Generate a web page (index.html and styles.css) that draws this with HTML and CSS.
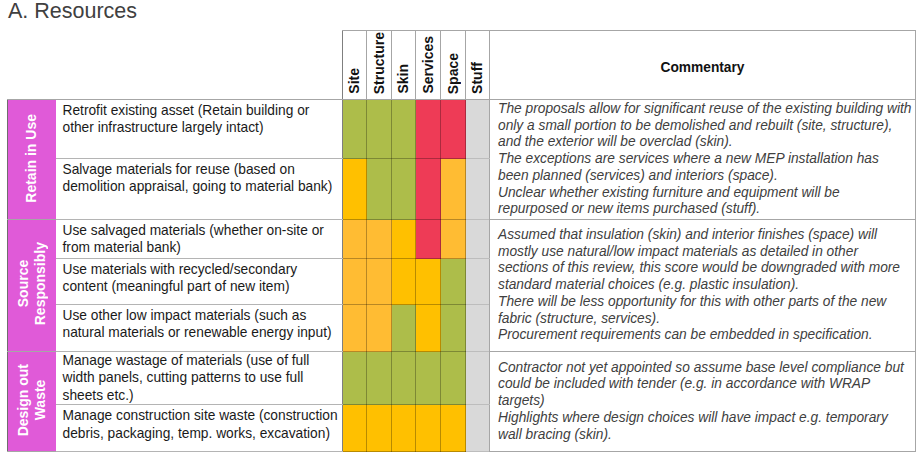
FILE: index.html
```html
<!DOCTYPE html>
<html lang="en">
<head>
<meta charset="utf-8">
<title>A. Resources</title>
<link rel="stylesheet" href="styles.css">
</head>
<body>
<h1 class="title">A. Resources</h1>
<table class="grid">
  <colgroup>
    <col class="c-group"><col class="c-desc">
    <col class="c-24"><col class="c-25"><col class="c-24"><col class="c-25"><col class="c-25"><col class="c-24">
    <col class="c-comm">
  </colgroup>
  <thead>
    <tr class="head">
      <th class="blank" colspan="2"></th>
      <th class="rot first"><span>Site</span></th>
      <th class="rot"><span>Structure</span></th>
      <th class="rot"><span>Skin</span></th>
      <th class="rot"><span>Services</span></th>
      <th class="rot"><span>Space</span></th>
      <th class="rot"><span>Stuff</span></th>
      <th class="comm-h">Commentary</th>
    </tr>
  </thead>
  <tbody>
    <tr class="h59">
      <td class="group" rowspan="2"><span>Retain in Use</span></td>
      <td class="desc">Retrofit existing asset (Retain building or<br>other infrastructure largely intact)</td>
      <td class="cell g first"></td><td class="cell g"></td><td class="cell g"></td><td class="cell r"></td><td class="cell r"></td><td class="cell x"></td>
      <td class="comm" rowspan="2">The proposals allow for significant reuse of the existing building with<br>only a small portion to be demolished and rebuilt (site, structure),<br>and the exterior will be overclad (skin).<br>The exceptions are services where a new MEP installation has<br>been planned (services) and interiors (space).<br>Unclear whether existing furniture and equipment will be<br>repurposed or new items purchased (stuff).</td>
    </tr>
    <tr class="h61">
      <td class="desc">Salvage materials for reuse (based on<br>demolition appraisal, going to material bank)</td>
      <td class="cell a first"></td><td class="cell g"></td><td class="cell g"></td><td class="cell r"></td><td class="cell o"></td><td class="cell x"></td>
    </tr>
    <tr class="h39">
      <td class="group" rowspan="3"><span>Source<br>Responsibly</span></td>
      <td class="desc">Use salvaged materials (whether on-site or<br>from material bank)</td>
      <td class="cell o first"></td><td class="cell o"></td><td class="cell a"></td><td class="cell r"></td><td class="cell o"></td><td class="cell x"></td>
      <td class="comm" rowspan="3">Assumed that insulation (skin) and interior finishes (space) will<br>mostly use natural/low impact materials as detailed in other<br>sections of this review, this score would be downgraded with more<br>standard material choices (e.g. plastic insulation).<br>There will be less opportunity for this with other parts of the new<br>fabric (structure, services).<br>Procurement requirements can be embedded in specification.</td>
    </tr>
    <tr class="h46">
      <td class="desc">Use materials with recycled/secondary<br>content (meaningful part of new item)</td>
      <td class="cell o first"></td><td class="cell o"></td><td class="cell a"></td><td class="cell a"></td><td class="cell g"></td><td class="cell x"></td>
    </tr>
    <tr class="h47">
      <td class="desc">Use other low impact materials (such as<br>natural materials or renewable energy input)</td>
      <td class="cell o first"></td><td class="cell o"></td><td class="cell g"></td><td class="cell a"></td><td class="cell g"></td><td class="cell x"></td>
    </tr>
    <tr class="h52">
      <td class="group" rowspan="2"><span>Design out<br>Waste</span></td>
      <td class="desc tight">Manage wastage of materials (use of full<br>width panels, cutting patterns to use full<br>sheets etc.)</td>
      <td class="cell g first"></td><td class="cell g"></td><td class="cell g"></td><td class="cell g"></td><td class="cell g"></td><td class="cell x"></td>
      <td class="comm" rowspan="2">Contractor not yet appointed so assume base level compliance but<br>could be included with tender (e.g. in accordance with WRAP<br>targets)<br>Highlights where design choices will have impact e.g. temporary<br>wall bracing (skin).</td>
    </tr>
    <tr class="h47">
      <td class="desc">Manage construction site waste (construction<br>debris, packaging, temp. works, excavation)</td>
      <td class="cell a first"></td><td class="cell a"></td><td class="cell a"></td><td class="cell a"></td><td class="cell a"></td><td class="cell x"></td>
    </tr>
  </tbody>
</table>
</body>
</html>
```

FILE: styles.css
```css
* { box-sizing: border-box; }

html, body {
  margin: 0;
  padding: 0;
  background: #ffffff;
}

body {
  padding: 0 0 0 7px;
  font-family: "Liberation Sans", Arial, sans-serif;
  color: #222222;
}

.title {
  margin: 0;
  height: 30px;
  padding: 0 0 0 1px;
  font-size: 21.5px;
  line-height: 22px;
  font-weight: normal;
  color: #404040;
}

.grid {
  border-collapse: collapse;
  table-layout: fixed;
  width: 908px;
}

.c-group { width: 48px; }
.c-desc { width: 287px; }
.c-24 { width: 24px; }
.c-25 { width: 25px; }
.c-comm { width: 426px; }

.head { height: 69px; }

.head th {
  padding: 0;
  border-top: 1px solid #a6a6a6;
  border-bottom: 1px solid #a6a6a6;
}

.head th.blank {
  border-top: none;
}

.head th.rot {
  vertical-align: bottom;
  text-align: center;
  font-size: 14px;
  font-weight: bold;
  color: #111111;
  padding: 0 0 2px;
  border-left: 1px solid #a6a6a6;
}

.head th.rot.first {
  border-left: 1px solid #7f7f7f;
}

.rot span {
  display: inline-block;
  writing-mode: vertical-rl;
  transform: rotate(180deg);
  line-height: 15px;
  white-space: nowrap;
}

.head th.comm-h {
  font-size: 13.75px;
  font-weight: bold;
  color: #111111;
  text-align: center;
  vertical-align: middle;
  padding: 4px 0 0;
  border-left: 1px solid #a6a6a6;
  border-right: 1px solid #a6a6a6;
}

.h59 { height: 59px; }
.h61 { height: 61px; }
.h39 { height: 39px; }
.h46 { height: 46px; }
.h47 { height: 47px; }
.h52 { height: 52px; }

.group {
  padding: 0;
  background: #e05ad8;
  color: #ffffff;
  font-size: 14px;
  font-weight: bold;
  text-align: center;
  vertical-align: middle;
  border-left: 1px solid #6e6e6e;
  border-bottom: 1px solid #a6a6a6;
}

.group span {
  display: inline-block;
  writing-mode: vertical-rl;
  transform: rotate(180deg);
  line-height: 17px;
  white-space: nowrap;
  text-align: center;
}

.desc {
  font-size: 13.75px;
  line-height: 17.4px;
  color: #1a1a1a;
  vertical-align: top;
  padding: 2px 0 0 7px;
  white-space: nowrap;
  border-bottom: 1px solid #b4b4b4;
}

.desc.tight {
  padding-top: 0;
}

.cell {
  padding: 0;
  border: 1px solid rgba(0, 0, 0, 0.28);
}

.cell.first {
  border-left: 1px solid #7f7f7f;
}

.cell.x {
  border-color: #bdbdbd;
  border-right: 1px solid #a6a6a6;
}

.g { background: #adbd4a; }
.r { background: #ee3b56; }
.a { background: #ffc000; }
.o { background: #ffbc33; }
.x { background: #d9d9d9; }

.comm {
  font-size: 13.75px;
  font-style: italic;
  line-height: 16.8px;
  color: #404040;
  vertical-align: middle;
  padding: 0 0 0 8px;
  white-space: nowrap;
  border: 1px solid #a6a6a6;
}
```
